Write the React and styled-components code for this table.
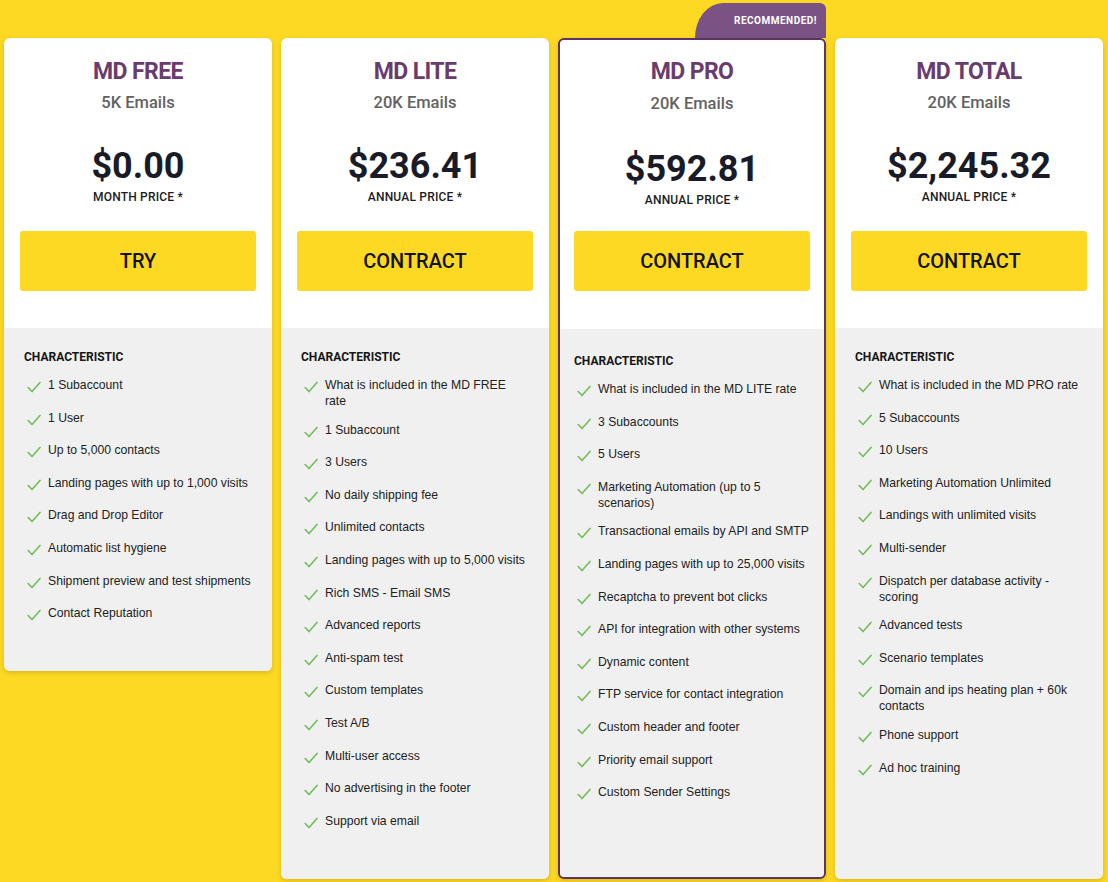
import React from "react"
import styled, { createGlobalStyle, css } from "styled-components"

const GlobalStyle = createGlobalStyle`
  html, body {
    margin: 0;
    padding: 0;
    background: #fdd923;
  }
  * {
    box-sizing: border-box;
  }
`

const plans = [
  {
    name: "MD FREE",
    emails: "5K Emails",
    price: "$0.00",
    period: "MONTH PRICE *",
    action: "TRY",
    compact: true,
    features: [
      "1 Subaccount",
      "1 User",
      "Up to 5,000 contacts",
      "Landing pages with up to 1,000 visits",
      "Drag and Drop Editor",
      "Automatic list hygiene",
      "Shipment preview and test shipments",
      "Contact Reputation",
    ],
  },
  {
    name: "MD LITE",
    emails: "20K Emails",
    price: "$236.41",
    period: "ANNUAL PRICE *",
    action: "CONTRACT",
    features: [
      "What is included in the MD FREE rate",
      "1 Subaccount",
      "3 Users",
      "No daily shipping fee",
      "Unlimited contacts",
      "Landing pages with up to 5,000 visits",
      "Rich SMS - Email SMS",
      "Advanced reports",
      "Anti-spam test",
      "Custom templates",
      "Test A/B",
      "Multi-user access",
      "No advertising in the footer",
      "Support via email",
    ],
  },
  {
    name: "MD PRO",
    emails: "20K Emails",
    price: "$592.81",
    period: "ANNUAL PRICE *",
    action: "CONTRACT",
    featured: true,
    features: [
      "What is included in the MD LITE rate",
      "3 Subaccounts",
      "5 Users",
      "Marketing Automation (up to 5 scenarios)",
      "Transactional emails by API and SMTP",
      "Landing pages with up to 25,000 visits",
      "Recaptcha to prevent bot clicks",
      "API for integration with other systems",
      "Dynamic content",
      "FTP service for contact integration",
      "Custom header and footer",
      "Priority email support",
      "Custom Sender Settings",
    ],
  },
  {
    name: "MD TOTAL",
    emails: "20K Emails",
    price: "$2,245.32",
    period: "ANNUAL PRICE *",
    action: "CONTRACT",
    features: [
      "What is included in the MD PRO rate",
      "5 Subaccounts",
      "10 Users",
      "Marketing Automation Unlimited",
      "Landings with unlimited visits",
      "Multi-sender",
      "Dispatch per database activity - scoring",
      "Advanced tests",
      "Scenario templates",
      "Domain and ips heating plan + 60k contacts",
      "Phone support",
      "Ad hoc training",
    ],
  },
]

const Page = styled.div`
  display: flex;
  align-items: stretch;
  gap: 9px;
  padding: 38px 0 4px 4px;
`

const Card = styled.div`
  position: relative;
  display: flex;
  flex-direction: column;
  width: 268px;
  flex-shrink: 0;
  background: #ffffff;
  border-radius: 6px;
  box-shadow: 0 2px 5px rgba(90, 70, 0, 0.22);
  align-self: ${(p) => (p.$compact ? "flex-start" : "stretch")};
  ${(p) =>
    p.$featured &&
    css`
      border: 2px solid #5c3563;
    `}
`

const Ribbon = styled.div`
  position: absolute;
  top: -37px;
  right: -2px;
  width: 131px;
  height: 35px;
  display: flex;
  align-items: center;
  justify-content: flex-end;
  padding-right: 9px;
  background: #7a5283;
  border-radius: 28px 6px 0 0 / 35px 6px 0 0;
  color: #ffffff;
  font-family: Roboto, "Liberation Sans", sans-serif;
  font-weight: 700;
  font-size: 10px;
  letter-spacing: 0.5px;
`

const Head = styled.div`
  display: flex;
  flex-direction: column;
  align-items: center;
  padding: ${(p) => (p.$featured ? "19px 14px 38px" : "21px 16px 37px")};
  font-family: Roboto, "Liberation Sans", sans-serif;
  border-radius: 6px 6px 0 0;
`

const Title = styled.h2`
  margin: 0;
  font-size: 23px;
  line-height: 26px;
  font-weight: 700;
  letter-spacing: -0.6px;
  color: #6a3c6e;
`

const Emails = styled.div`
  margin-top: ${(p) => (p.$featured ? "9px" : "8px")};
  font-size: 16.5px;
  line-height: 20px;
  font-weight: 500;
  color: #626262;
`

const Price = styled.div`
  margin-top: ${(p) => (p.$featured ? "34px" : "32px")};
  font-size: 36px;
  line-height: 42px;
  font-weight: 700;
  color: #191b28;
`

const Period = styled.div`
  margin-top: 2px;
  font-size: 12px;
  line-height: 16px;
  font-weight: 500;
  letter-spacing: 0.2px;
  color: #1b1b24;
`

const Action = styled.button`
  margin-top: ${(p) => (p.$featured ? "23px" : "26px")};
  width: 100%;
  height: 60px;
  border: none;
  border-radius: 3px;
  background: #fdd923;
  font-family: Roboto, "Liberation Sans", sans-serif;
  font-size: 20px;
  font-weight: 500;
  color: #121212;
  cursor: pointer;
`

const Body = styled.div`
  flex: 1;
  background: #f0f0f0;
  border-radius: 0 0 6px 6px;
  padding: ${(p) => (p.$featured ? "24px 12px 46px 14px" : "21px 20px 46px 20px")};
`

const Heading = styled.div`
  font-family: Roboto, "Liberation Sans", sans-serif;
  font-size: 12px;
  line-height: 16px;
  font-weight: 700;
  color: #161616;
`

const List = styled.ul`
  list-style: none;
  margin: 12px 0 0;
  padding: 0;
  display: flex;
  flex-direction: column;
  gap: 12.6px;
`

const Item = styled.li`
  display: flex;
  align-items: flex-start;
  min-height: 20px;
  font-family: "Liberation Sans", Arial, sans-serif;
  font-size: 12.2px;
  line-height: 16px;
  color: #222222;

  svg {
    flex-shrink: 0;
    margin: 0 7px 0 3px;
  }
`

const Check = () => (
  <svg width="14" height="20" viewBox="0 0 14 20">
    <path
      d="M1.2 10.6 L5 14.6 L13 5.4"
      fill="none"
      stroke="#6dbb55"
      strokeWidth="1.5"
      strokeLinecap="round"
      strokeLinejoin="round"
    />
  </svg>
)

const PlanCard = ({ plan }) => (
  <Card $featured={plan.featured} $compact={plan.compact}>
    {plan.featured && <Ribbon>RECOMMENDED!</Ribbon>}
    <Head $featured={plan.featured}>
      <Title>{plan.name}</Title>
      <Emails $featured={plan.featured}>{plan.emails}</Emails>
      <Price $featured={plan.featured}>{plan.price}</Price>
      <Period>{plan.period}</Period>
      <Action $featured={plan.featured}>{plan.action}</Action>
    </Head>
    <Body $featured={plan.featured}>
      <Heading>CHARACTERISTIC</Heading>
      <List>
        {plan.features.map((f) => (
          <Item key={f}>
            <Check />
            <span>{f}</span>
          </Item>
        ))}
      </List>
    </Body>
  </Card>
)

const App = () => (
  <>
    <GlobalStyle />
    <Page>
      {plans.map((p) => (
        <PlanCard key={p.name} plan={p} />
      ))}
    </Page>
  </>
)

export default App
